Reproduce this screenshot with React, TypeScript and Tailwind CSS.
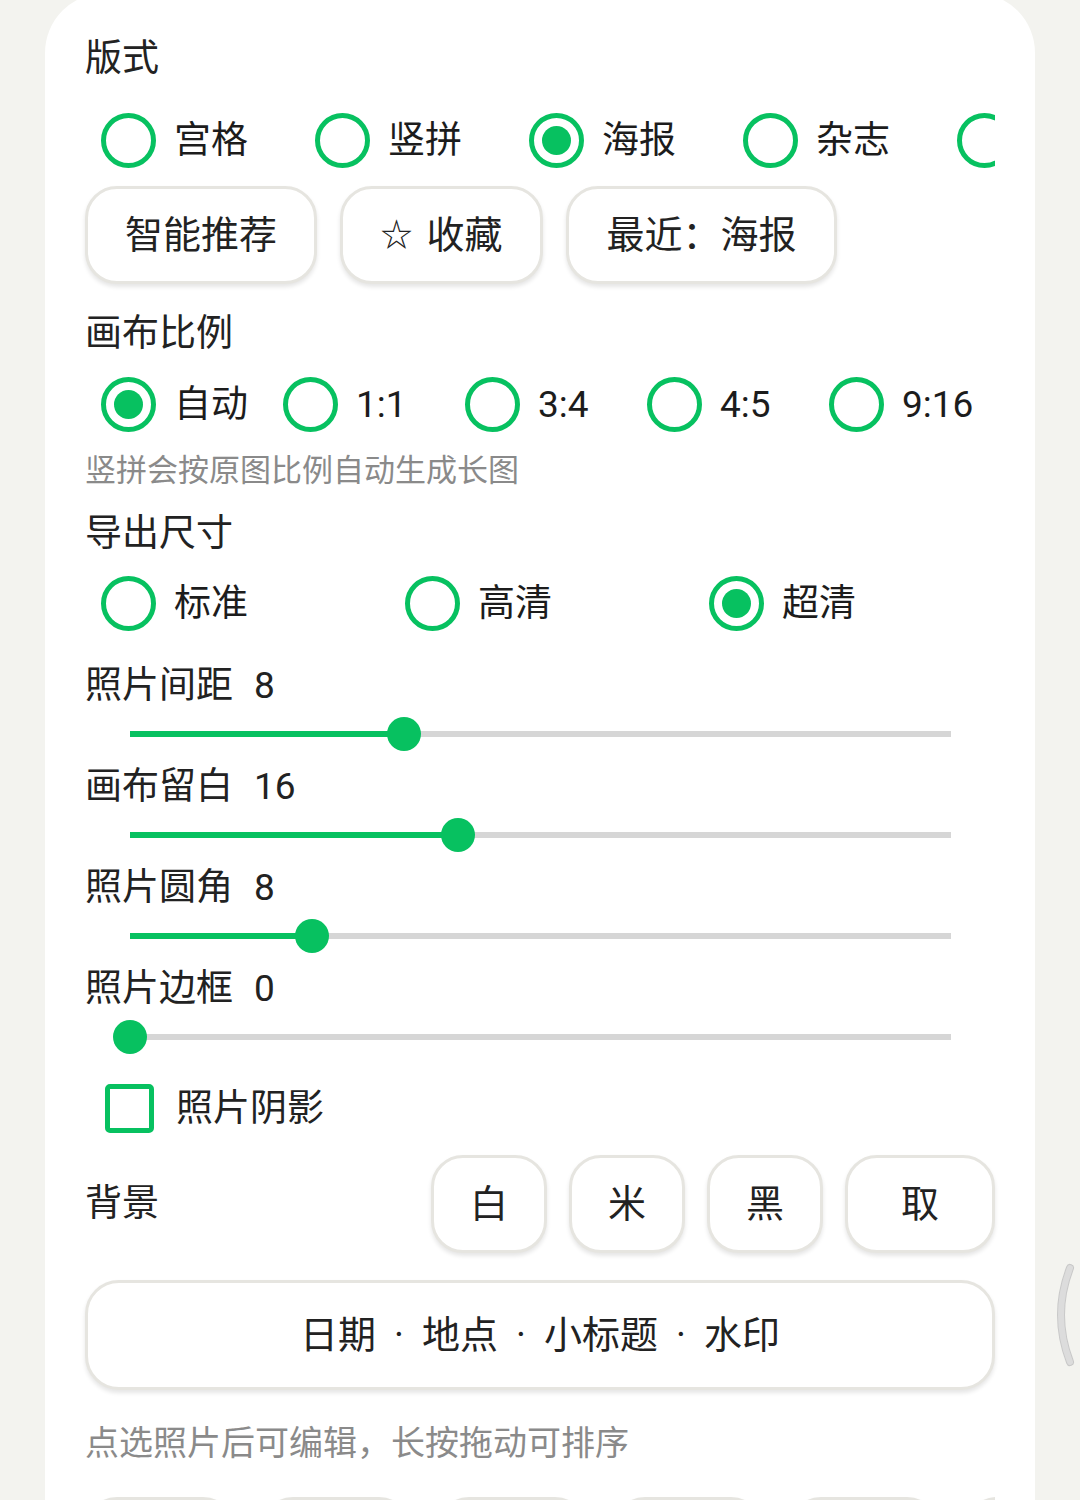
import React from 'react';

const FONT = { fontFamily: 'Roboto, "Noto Sans CJK SC", sans-serif' };

function Radio({ label, checked = false, width }: { label?: string; checked?: boolean; width: string }) {
  return (
    <div className={`flex shrink-0 items-center pl-4 ${width}`}>
      <div className="flex h-[55px] w-[55px] shrink-0 items-center justify-center rounded-full border-[5px] border-[#07c160]">
        {checked && <div className="h-[29px] w-[29px] rounded-full bg-[#07c160]" />}
      </div>
      {label && <span className="ml-[18px] whitespace-nowrap text-[37px] leading-none text-[#1c1c1c]">{label}</span>}
    </div>
  );
}

function Pill({ children, className = '' }: { children?: React.ReactNode; className?: string }) {
  return (
    <div
      className={`flex shrink-0 items-center justify-center rounded-[32px] border-[3px] border-[#e6e5e0] bg-white text-[38px] leading-none text-[#222] shadow-[0_3px_4px_rgba(0,0,0,0.10)] ${className}`}
    >
      {children}
    </div>
  );
}

function SliderRow({ label, value, max }: { label: string; value: number; max: number }) {
  const pct = (value / max) * 100;
  return (
    <div className="flex flex-col">
      <div className="flex h-[56px] items-center text-[37px] leading-none text-[#222]">
        <span>{label}</span>
        <span className="ml-[21px]">{value}</span>
      </div>
      <div className="flex h-[45px] items-center pb-[4px] pl-[45px] pr-[44px]">
        <div className="relative h-[6px] w-full bg-[#d6d6d6]">
          <div className="absolute left-0 top-0 h-full bg-[#07c160]" style={{ width: `${pct}%` }} />
          <div
            className="absolute top-1/2 h-[34px] w-[34px] -translate-x-1/2 -translate-y-1/2 rounded-full bg-[#07c160]"
            style={{ left: `${pct}%` }}
          />
        </div>
      </div>
    </div>
  );
}

const Dot = () => <span className="inline-block w-[46px] text-center">·</span>;

export default function App() {
  return (
    <div className="relative h-[1500px] w-[1080px] overflow-hidden bg-[#f3f3ef]" style={FONT}>
      <div className="ml-[45px] mt-[-7px] w-[990px] rounded-t-[60px] bg-white px-[40px] pt-[37px] pb-[40px]">
        <div className="flex h-[56px] items-center text-[37px] leading-none text-[#222]">版式</div>

        <div className="mt-[26px] flex h-[56px] w-[910px] overflow-hidden">
          <Radio label="宫格" width="w-[214px]" />
          <Radio label="竖拼" width="w-[214px]" />
          <Radio label="海报" checked width="w-[214px]" />
          <Radio label="杂志" width="w-[214px]" />
          <Radio width="w-[214px]" />
        </div>

        <div className="mt-[18px] flex h-[98px] gap-[23px]">
          <Pill className="w-[232px]">智能推荐</Pill>
          <Pill className="w-[203px]">
            <span className="mr-[14px] text-[32px]">☆</span>收藏
          </Pill>
          <Pill className="w-[271px]">最近：海报</Pill>
        </div>

        <div className="mt-[21px] flex h-[56px] items-center text-[37px] leading-none text-[#222]">画布比例</div>

        <div className="mt-[15px] flex h-[56px]">
          <Radio label="自动" checked width="w-[182px]" />
          <Radio label="1:1" width="w-[182px]" />
          <Radio label="3:4" width="w-[182px]" />
          <Radio label="4:5" width="w-[182px]" />
          <Radio label="9:16" width="w-[182px]" />
        </div>

        <div className="mt-[18px] flex h-[40px] items-center text-[31px] leading-none text-[#8a8a8a]">
          竖拼会按原图比例自动生成长图
        </div>

        <div className="mt-[15px] flex h-[56px] items-center text-[37px] leading-none text-[#222]">导出尺寸</div>

        <div className="mt-[14px] flex h-[56px]">
          <Radio label="标准" width="w-[304px]" />
          <Radio label="高清" width="w-[304px]" />
          <Radio label="超清" checked width="w-[304px]" />
        </div>

        <div className="mt-[26px] flex flex-col">
          <SliderRow label="照片间距" value={8} max={24} />
          <SliderRow label="画布留白" value={16} max={40} />
          <SliderRow label="照片圆角" value={8} max={36} />
          <SliderRow label="照片边框" value={0} max={12} />
        </div>

        <div className="mt-[19px] flex h-[56px] items-center pl-[20px]">
          <div className="h-[49px] w-[49px] rounded-[5px] border-[5px] border-[#07c160]" />
          <span className="ml-[22px] text-[37px] leading-none text-[#222]">照片阴影</span>
        </div>

        <div className="mt-[18px] flex h-[99px] items-center justify-between">
          <span className="text-[37px] leading-none text-[#222]">背景</span>
          <div className="flex h-[98px] gap-[22px]">
            <Pill className="w-[116px] rounded-[30px]">白</Pill>
            <Pill className="w-[116px] rounded-[30px]">米</Pill>
            <Pill className="w-[116px] rounded-[30px]">黑</Pill>
            <Pill className="w-[150px] rounded-[30px]">取</Pill>
          </div>
        </div>

        <Pill className="mt-[27px] h-[110px] w-[910px] rounded-[34px]">
          日期<Dot />地点<Dot />小标题<Dot />水印
        </Pill>

        <div className="mt-[31px] flex h-[44px] items-center text-[34px] leading-none text-[#8a8a8a]">
          点选照片后可编辑，长按拖动可排序
        </div>

        <div className="mt-[32px] flex h-[98px] w-[910px] gap-[26px] overflow-hidden">
          {[0, 1, 2, 3, 4, 5].map((i) => (
            <Pill key={i} className="w-[150px] rounded-[30px]" />
          ))}
        </div>
      </div>

      <svg className="absolute left-[1048px] top-[1262px]" width="30" height="106" viewBox="0 0 30 106">
        <path d="M22 6 Q4 53 22 100" fill="none" stroke="#c9c9c9" strokeWidth="8" strokeLinecap="round" />
        <path d="M22 6 Q4 53 22 100" fill="none" stroke="#dcdcdc" strokeWidth="6" strokeLinecap="round" />
      </svg>
    </div>
  );
}
